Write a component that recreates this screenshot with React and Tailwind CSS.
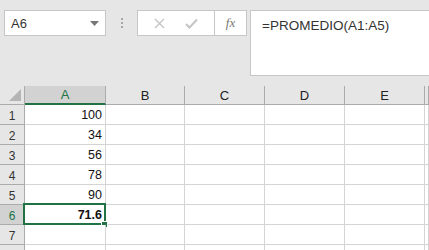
import React from "react";

const cols = ["A", "B", "C", "D", "E", ""];
const data = [100, 34, 56, 78, 90, 71.6, "", ""];

const App = () => {
  return (
    <div
      className="w-[429px] h-[250px] overflow-hidden bg-[#e6e6e6] text-[#222]"
      style={{ fontFamily: '"Liberation Sans", Arial, sans-serif' }}
    >
      {/* formula bar area */}
      <div className="h-[86px] flex items-start pt-[10px] pl-[4px]">
        <div className="w-[102px] h-[26px] bg-white border border-[#c6c6c6] flex items-center pl-[6px] pr-[6px] pt-[1px] text-[13px] text-[#333]">
          <span className="flex-1">A6</span>
          <svg width="9" height="5" viewBox="0 0 9 5">
            <path d="M0 0 L9 0 L4.5 5 Z" fill="#777" />
          </svg>
        </div>
        <div className="w-[31px] h-[26px] flex flex-col items-center justify-center gap-[2px]">
          <div className="w-[2px] h-[2px] bg-[#a8a8a8]" />
          <div className="w-[2px] h-[2px] bg-[#a8a8a8]" />
          <div className="w-[2px] h-[2px] bg-[#a8a8a8]" />
        </div>
        <div className="h-[26px] flex bg-white border border-[#c6c6c6]">
          <div className="w-[77px] flex items-center justify-around border-r border-[#c6c6c6] px-[6px]">
            <svg width="11" height="11" viewBox="0 0 11 11">
              <path d="M1 1 L10 10 M10 1 L1 10" stroke="#c4c4c4" strokeWidth="1.4" />
            </svg>
            <svg width="13" height="11" viewBox="0 0 13 11">
              <path d="M1 6 L4.5 9.5 L12 1.5" stroke="#c4c4c4" strokeWidth="2" fill="none" />
            </svg>
          </div>
          <div
            className="w-[31px] flex items-center justify-center text-[13px] italic text-[#777]"
            style={{ fontFamily: '"Liberation Serif", "Times New Roman", serif' }}
          >
            fx
          </div>
        </div>
        <div className="ml-[3px] flex-1 h-[66px] bg-white border border-[#c6c6c6] border-r-0 pl-[11px] pt-[5px] text-[13.5px] text-[#333]">
          =PROMEDIO(A1:A5)
        </div>
      </div>

      {/* grid */}
      <div className="grid grid-cols-[25px_81px_79px_80px_80px_80px_1fr] auto-rows-[20px] grid-rows-[19px]">
        {/* header row */}
        <div className="relative border-r border-b border-[#ababab] bg-[#e6e6e6]">
          <svg className="absolute right-[3px] bottom-[3px]" width="12" height="12" viewBox="0 0 12 12">
            <path d="M12 0 L12 12 L0 12 Z" fill="#b4b4b4" />
          </svg>
        </div>
        {cols.map((c, i) =>
          i === 0 ? (
            <div
              key={c}
              className="bg-[#d2d2d2] border-r border-[#ababab] border-b-2 border-b-[#217346] flex items-center justify-center pt-[1px] text-[13px] text-[#217346]"
            >
              {c}
            </div>
          ) : (
            <div
              key={i}
              className="bg-[#e6e6e6] border-r border-b border-[#ababab] flex items-center justify-center pt-[1px] text-[13px] text-[#222]"
            >
              {c}
            </div>
          )
        )}

        {/* rows */}
        {data.map((v, r) => (
          <React.Fragment key={r}>
            <div
              className={`border-r border-b border-[#ababab] flex items-center justify-center pt-[2px] text-[12px] ${
                r === 5 ? "bg-[#d2d2d2] text-[#217346]" : "bg-[#e6e6e6] text-[#333]"
              }`}
            >
              {r < 7 ? r + 1 : ""}
            </div>
            <div
              className={`relative bg-white border-r border-b border-[#d4d4d4] flex items-center justify-end pr-[3px] pt-[2px] text-[12.5px] ${
                r === 5 ? "font-bold text-[#111]" : "text-[#111]"
              }`}
            >
              {v}
              {r === 5 && (
                <>
                  <div className="absolute -left-[2px] -top-[2px] w-[83px] h-[22px] border-2 border-[#217346]" />
                  <div className="absolute -right-[2px] -bottom-[3px] w-[5px] h-[5px] bg-[#217346] outline outline-1 outline-white" />
                </>
              )}
            </div>
            {[0, 1, 2, 3, 4].map((k) => (
              <div key={k} className="bg-white border-r border-b border-[#d4d4d4]" />
            ))}
          </React.Fragment>
        ))}
      </div>
    </div>
  );
};

export default App;
